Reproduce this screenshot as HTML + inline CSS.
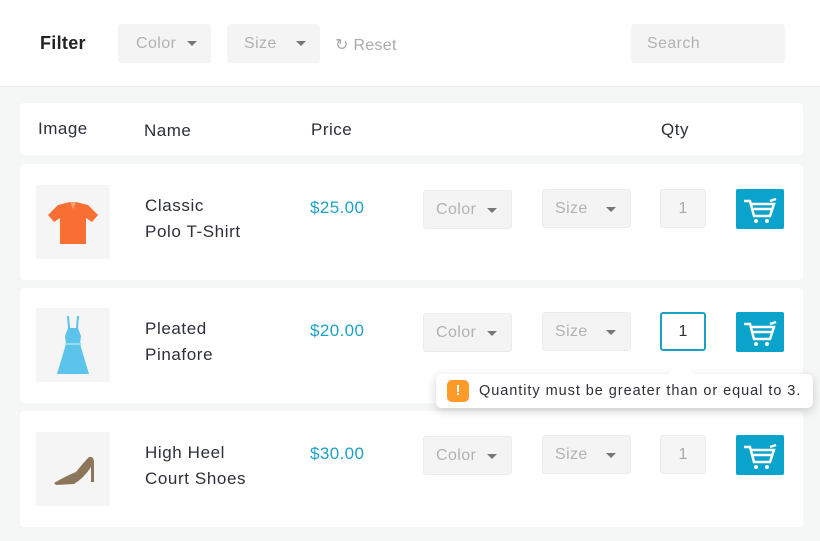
<!DOCTYPE html>
<html><head><style>
*{box-sizing:border-box;margin:0;padding:0}
body{width:820px;height:541px;background:#f5f7f7;font-family:"Liberation Sans",sans-serif;position:relative;overflow:hidden;color:#2d2f3a}
.a{position:absolute}
.top{left:0;top:0;width:820px;height:87px;background:#fff;border-bottom:1px solid #e8ebeb}
.card{background:#fff;border-radius:4px;left:20px;width:783px}
.sel{background:#f4f4f4;border:1px solid #ececec;border-radius:3px;color:#b2b2b2;font-size:16px;line-height:38px;padding-left:12px;letter-spacing:.4px}
.sel:after{content:"";position:absolute;right:14px;top:17px;border:5px solid transparent;border-top:5px solid #777;border-bottom:0}
.img{width:74px;height:74px;background:#f5f5f5}
.nm{font-size:17px;line-height:26px;color:#2d2f3a;letter-spacing:.6px}
.pr{font-size:17px;color:#1da1c7;letter-spacing:.4px}
.qty{width:46px;height:39px;background:#f5f5f5;border:1px solid #ececec;border-radius:3px;color:#aaa;font-size:16px;text-align:center;line-height:37px}
.cart{width:48px;height:40px;background:#0aa3cb;border-radius:2px}
.h{font-size:17px;color:#2d2f3a;letter-spacing:.5px}
</style></head><body>
<div class="a top"></div>
<div class="a" style="left:40px;top:33px;font-size:18px;font-weight:bold;color:#222;letter-spacing:.3px">Filter</div>
<div class="a sel" style="left:118px;top:24px;width:93px;height:39px;border:none;line-height:40px;padding-left:18px">Color</div>
<div class="a sel" style="left:227px;top:24px;width:93px;height:39px;border:none;line-height:40px;padding-left:17px">Size</div>
<div class="a" style="left:335px;top:35px;font-size:16px;color:#aaa;letter-spacing:.3px">&#8635; Reset</div>
<div class="a" style="left:631px;top:24px;width:154px;height:39px;background:#f4f4f4;border-radius:3px;color:#b2b2b2;font-size:16px;line-height:40px;padding-left:16px;letter-spacing:.4px">Search</div>

<div class="a card" style="top:103px;height:52px"></div>
<div class="a h" style="left:38px;top:119px">Image</div>
<div class="a h" style="left:144px;top:121px">Name</div>
<div class="a h" style="left:311px;top:120px">Price</div>
<div class="a h" style="left:661px;top:120px">Qty</div>

<div class="a card" style="top:164px;height:116px"></div>
<div class="a card" style="top:288px;height:115px"></div>
<div class="a card" style="top:411px;height:116px"></div>

<div class="a img" style="left:36px;top:185px"><svg width="74" height="74"><path d="M22 20 L34 17 L40 17 L52 20 L62 30 L56 37 L50 33 L50 59 L24 59 L24 33 L18 37 L12 30 Z" fill="#f86f33"/><path d="M34 17 L37 24 L40 17" fill="#ffa279"/></svg></div>
<div class="a nm" style="left:145px;top:193px">Classic<br>Polo T-Shirt</div>
<div class="a pr" style="left:310px;top:198px">$25.00</div>

<div class="a img" style="left:36px;top:308px"><svg width="74" height="74"><path d="M31 8 L32 20 L29 28 L30 36 L21 66 L53 66 L44 36 L45 28 L42 20 L43 8 L41 8 L40 20 L34 20 L33 8 Z" fill="#5cc3ea"/><path d="M29 36 L45 36" stroke="#9adcf5" stroke-width="2"/></svg></div>
<div class="a nm" style="left:145px;top:316px">Pleated<br>Pinafore</div>
<div class="a pr" style="left:310px;top:321px">$20.00</div>

<div class="a img" style="left:36px;top:432px"><svg width="74" height="74"><path d="M18 51 Q30 44 40 40 Q48 30 53 25 Q57 24 58 29 L58 50 L55 50 L55 35 Q48 46 38 52 L20 53 Z" fill="#8b765c"/></svg></div>
<div class="a nm" style="left:145px;top:440px">High Heel<br>Court Shoes</div>
<div class="a pr" style="left:310px;top:444px">$30.00</div>

<div class="a sel" style="left:423px;top:190px;width:89px;height:39px">Color</div>
<div class="a sel" style="left:542px;top:189px;width:89px;height:39px">Size</div>
<div class="a qty" style="left:660px;top:189px">1</div>
<div class="a cart" style="left:736px;top:189px"><svg width="48" height="40"><path d="M8 12 L14 12 L18 27 L34 27 L38 15 L16 15 M17 20 L36 20 M34 12 L40 10" stroke="#fff" stroke-width="2.5" fill="none"/><circle cx="20" cy="32" r="2" fill="#fff"/><circle cx="31" cy="32" r="2" fill="#fff"/></svg></div>

<div class="a sel" style="left:423px;top:313px;width:89px;height:39px">Color</div>
<div class="a sel" style="left:542px;top:312px;width:89px;height:39px">Size</div>
<div class="a qty" style="left:660px;top:312px;background:#fff;border:2px solid #1ba0c6;color:#333;line-height:35px">1</div>
<div class="a cart" style="left:736px;top:312px"><svg width="48" height="40"><path d="M8 12 L14 12 L18 27 L34 27 L38 15 L16 15 M17 20 L36 20 M34 12 L40 10" stroke="#fff" stroke-width="2.5" fill="none"/><circle cx="20" cy="32" r="2" fill="#fff"/><circle cx="31" cy="32" r="2" fill="#fff"/></svg></div>

<div class="a sel" style="left:423px;top:436px;width:89px;height:39px">Color</div>
<div class="a sel" style="left:542px;top:435px;width:89px;height:39px">Size</div>
<div class="a qty" style="left:660px;top:435px">1</div>
<div class="a cart" style="left:736px;top:435px"><svg width="48" height="40"><path d="M8 12 L14 12 L18 27 L34 27 L38 15 L16 15 M17 20 L36 20 M34 12 L40 10" stroke="#fff" stroke-width="2.5" fill="none"/><circle cx="20" cy="32" r="2" fill="#fff"/><circle cx="31" cy="32" r="2" fill="#fff"/></svg></div>

<div class="a" style="left:436px;top:374px;width:377px;height:34px;background:#fff;border-radius:6px;box-shadow:0 3px 10px rgba(0,0,0,.18)"></div>
<div class="a" style="left:668px;top:361px;width:0;height:0;border:13px solid transparent;border-bottom:13px solid #fff;border-top:0"></div>
<div class="a" style="left:447px;top:380px;width:22px;height:22px;background:#fd9a28;border-radius:5px;color:#fff;font-weight:bold;text-align:center;line-height:22px;font-size:15px">!</div>
<div class="a" style="left:479px;top:383px;font-size:14.5px;color:#2d2f3a;letter-spacing:.95px">Quantity must be greater than or equal to 3.</div>
</body></html>
